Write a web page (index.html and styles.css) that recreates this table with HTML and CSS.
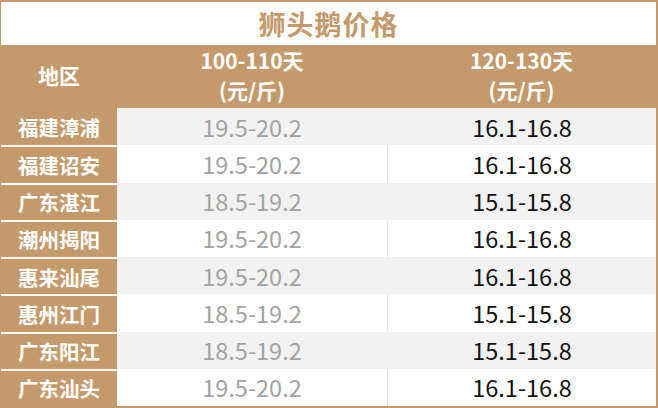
FILE: index.html
```html
<!DOCTYPE html>
<html lang="zh-CN">
<head>
<meta charset="utf-8">
<link rel="stylesheet" href="styles.css">
</head>
<body>
<div class="board">
  <div class="title">狮头鹅价格</div>
  <div class="grid">
    <div class="hcell">地区</div>
    <div class="hcell">100-110天<br>(元/斤)</div>
    <div class="hcell">120-130天<br>(元/斤)</div>

    <div class="name">福建漳浦</div><div class="v mid odd">19.5-20.2</div><div class="v right odd">16.1-16.8</div>
    <div class="name sep">福建诏安</div><div class="v mid">19.5-20.2</div><div class="v right">16.1-16.8</div>
    <div class="name sep">广东湛江</div><div class="v mid odd">18.5-19.2</div><div class="v right odd">15.1-15.8</div>
    <div class="name sep">潮州揭阳</div><div class="v mid">19.5-20.2</div><div class="v right">16.1-16.8</div>
    <div class="name sep">惠来汕尾</div><div class="v mid odd">19.5-20.2</div><div class="v right odd">16.1-16.8</div>
    <div class="name sep">惠州江门</div><div class="v mid">18.5-19.2</div><div class="v right">15.1-15.8</div>
    <div class="name sep">广东阳江</div><div class="v mid odd">18.5-19.2</div><div class="v right odd">15.1-15.8</div>
    <div class="name sep">广东汕头</div><div class="v mid">19.5-20.2</div><div class="v right">16.1-16.8</div>
  </div>
</div>
</body>
</html>
```

FILE: styles.css
```css
html, body {
  margin: 0;
  padding: 0;
  background: #fff;
}
body {
  font-family: "Noto Sans CJK SC", "Noto Sans", sans-serif;
}
.board {
  width: 658px;
  height: 408px;
  box-sizing: border-box;
  border-style: solid;
  border-color: #c49a6c;
  border-width: 2px 2px 2px 1px;
  display: flex;
  flex-direction: column;
}
.title {
  height: 43px;
  display: flex;
  align-items: center;
  justify-content: center;
  color: #c29a6c;
  font-size: 27px;
  font-weight: 700;
  letter-spacing: 1px;
}
.grid {
  flex: 1;
  display: grid;
  grid-template-columns: 116px 270px 1fr;
  grid-template-rows: 63px repeat(8, 1fr);
}
.hcell {
  background: #c49a6c;
  color: #fff;
  font-weight: 700;
  font-size: 21px;
  line-height: 30px;
  padding-bottom: 4px;
  box-sizing: border-box;
  display: flex;
  align-items: center;
  justify-content: center;
  text-align: center;
}
.name {
  background: #c49a6c;
  color: #fff;
  font-weight: 700;
  font-size: 20.5px;
  display: flex;
  align-items: center;
  justify-content: center;
  box-sizing: border-box;
}
.name.sep {
  border-top: 2px solid #fff;
}
.v {
  display: flex;
  align-items: center;
  justify-content: center;
  font-size: 23.5px;
  background: #fff;
  box-sizing: border-box;
}
.v.odd {
  background: #f2f2f2;
}
.mid {
  color: #a3a3a3;
}
.right {
  color: #111;
  border-left: 1px solid #e6e6e6;
}
.right.odd {
  border-left-color: #f2f2f2;
}
```
